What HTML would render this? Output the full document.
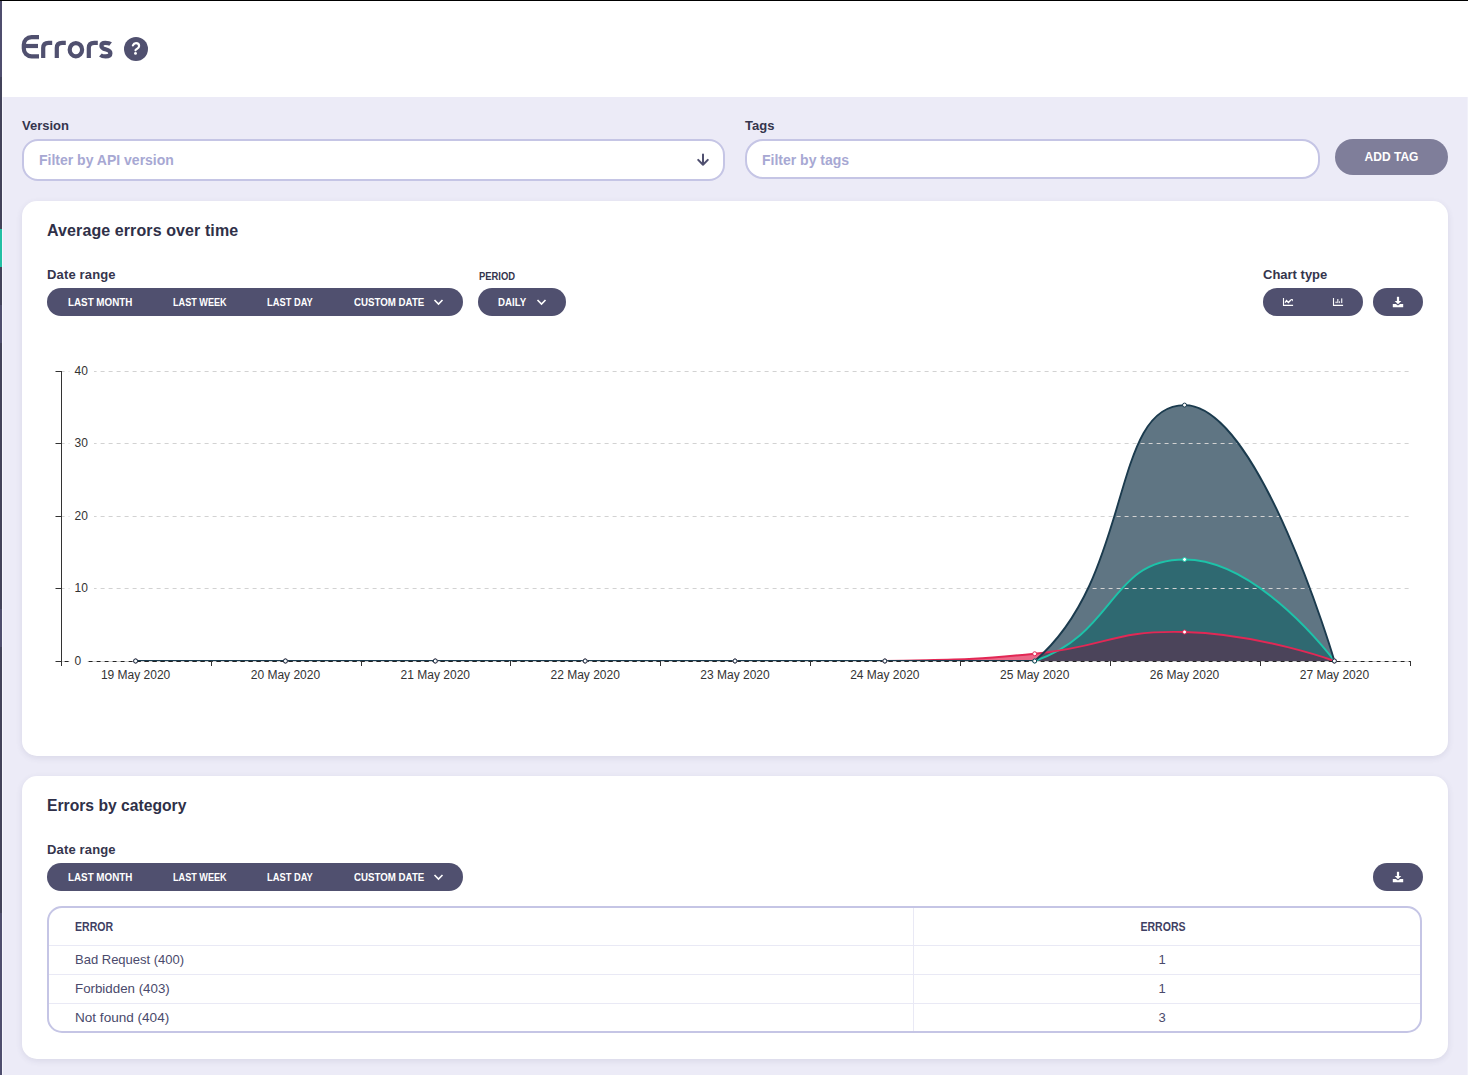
<!DOCTYPE html>
<html><head><meta charset="utf-8">
<style>
*{box-sizing:border-box;margin:0;padding:0}
html,body{width:1468px;height:1075px;overflow:hidden;background:#ecebf7;font-family:"Liberation Sans",sans-serif}
.abs{position:absolute}
.t{position:absolute;white-space:nowrap;line-height:1}
.hdr{position:absolute;left:0;top:0;width:1468px;height:97px;background:#fff}
.topline{position:absolute;left:0;top:0;width:1468px;height:1px;background:#000}
.side{position:absolute;left:0;width:2px}
.lbl{font-weight:bold;font-size:13px;color:#35354d}
.input{position:absolute;background:#fff;border:2px solid #c5c5e5;border-radius:16px}
.ph{font-size:14px;color:#a7a8d3;font-weight:bold}
.card{position:absolute;left:22px;width:1426px;background:#fff;border-radius:15px;box-shadow:0 2px 6px rgba(60,60,110,.11)}
.ctitle{font-weight:bold;font-size:16px;color:#2f3048}
.grp{position:absolute;height:28px;background:#50506f;border-radius:14px}
.bt{position:absolute;white-space:nowrap;line-height:1;color:#fff;font-weight:bold;font-size:10.5px}
.tbl{position:absolute;left:47px;top:906px;width:1375px;height:127px;border:2px solid #c5c5e5;border-radius:15px;background:#fff;overflow:hidden}
.row{position:absolute;left:0;width:1371px;height:1px;background:#e9e9f5}
.cell{position:absolute;white-space:nowrap;line-height:1;font-size:13px;color:#4a4a6c}
</style></head>
<body>
<div class="hdr"></div>
<div class="topline"></div>
<!-- sidebar strip -->
<div class="abs" style="left:1467px;top:97px;width:1px;height:978px;background:#f1f1fa"></div>
<div class="abs" style="left:2px;top:97px;width:1px;height:978px;background:#f7f7fd"></div>
<div class="side" style="top:1px;height:76px;background:#4f4e6e"></div>
<div class="side" style="top:77px;height:152px;background:#43435a"></div>
<div class="side" style="top:229px;height:38px;background:#22bfa4"></div>
<div class="side" style="top:267px;height:38px;background:#43435a"></div>
<div class="side" style="top:305px;height:38px;background:#4f4e6e"></div>
<div class="side" style="top:343px;height:266px;background:#43435a"></div>
<div class="side" style="top:609px;height:38px;background:#4f4e6e"></div>
<div class="side" style="top:647px;height:266px;background:#43435a"></div>
<div class="side" style="top:913px;height:162px;background:#4f4e6e"></div>

<!-- page title -->
<svg class="abs" style="left:0;top:0" width="130" height="70" viewBox="0 0 130 70"><g fill="none" stroke="#50506f" stroke-width="4.2" stroke-linejoin="round">
<path d="M39,37.1H31.6C26.9,37.1 23.8,40.6 23.8,44.8V48.6C23.8,52.8 26.9,56.3 31.6,56.3H39"/>
<path d="M24,46H38"/>
<path d="M43.2,58V48C43.2,44.6 45.4,42.9 48.6,42.9H52.2"/>
<path d="M56.8,58V48C56.8,44.6 59,42.9 62.2,42.9H65.8"/>
<ellipse cx="75.9" cy="49.7" rx="6.2" ry="6.6"/>
<path d="M88.8,58V48C88.8,44.6 91,42.9 94.2,42.9H97.8"/>
<path d="M110.6,44C109.6,43.2 107.4,42.9 105.3,42.9C102.5,42.9 101.4,44.3 101.4,45.9C101.4,48.1 103.6,48.8 106.2,49.5C108.8,50.2 110.4,51.1 110.4,53.2C110.4,55.1 108.8,56.4 105.6,56.4C103.6,56.4 101.6,56 100.4,55"/>
</g></svg>
<svg class="abs" style="left:124px;top:37px" width="24" height="24" viewBox="0 0 24 24"><circle cx="12" cy="12" r="12" fill="#50506f"/><path d="M8.9,8.4C9.5,7 10.6,6.2 12,6.2C13.8,6.2 15.1,7.5 15.1,9.1C15.1,10.5 14.1,11.2 13,11.9C12.1,12.5 11.5,12.8 11.5,13.3" stroke="#fff" stroke-width="2.2" stroke-linecap="round" fill="none"/><circle cx="11.5" cy="16.4" r="1.45" fill="#fff"/></svg>

<!-- filters -->
<div class="t lbl" style="left:22px;top:119px">Version</div>
<div class="input" style="left:22px;top:139px;width:703px;height:42px"></div>
<div class="t ph" style="left:39px;top:153px">Filter by API version</div>
<svg class="abs" style="left:696px;top:153px" width="14" height="15" viewBox="0 0 14 15"><path d="M7 1.5V11.8M2.2 6.9l4.8 4.9 4.8-4.9" stroke="#4f4f6f" stroke-width="2" fill="none" stroke-linecap="round" stroke-linejoin="round"/></svg>

<div class="t lbl" style="left:745px;top:119px">Tags</div>
<div class="input" style="left:745px;top:139px;width:575px;height:40px;border-radius:18px"></div>
<div class="t ph" style="left:762px;top:153px">Filter by tags</div>
<div class="abs" style="left:1335px;top:139px;width:113px;height:36px;border-radius:18px;background:#7f7e9a"></div>
<div class="t" style="left:1335px;top:151px;width:113px;text-align:center;color:#fff;font-weight:bold;font-size:12px">ADD TAG</div>

<!-- card 1 -->
<div class="card" style="top:201px;height:555px"></div>
<div class="t ctitle" style="left:47px;top:223px;letter-spacing:0.1px">Average errors over time</div>
<div class="t lbl" style="left:47px;top:268px;letter-spacing:0.15px">Date range</div>
<div class="grp" style="left:47px;top:288px;width:416px"></div>
<div class="bt" style="left:67.6px;top:297px;transform:scaleX(0.935);transform-origin:0 0">LAST MONTH</div>
<div class="bt" style="left:172.6px;top:297px;transform:scaleX(0.868);transform-origin:0 0">LAST WEEK</div>
<div class="bt" style="left:266.6px;top:297px;transform:scaleX(0.887);transform-origin:0 0">LAST DAY</div>
<div class="bt" style="left:353.6px;top:297px;transform:scaleX(0.925);transform-origin:0 0">CUSTOM DATE</div>
<svg class="abs" style="left:433px;top:298px" width="11" height="8" viewBox="0 0 11 8"><path d="M1.5 2l4 4 4-4" stroke="#fff" stroke-width="1.6" fill="none"/></svg>

<div class="t" style="left:478.5px;top:272px;font-size:10px;font-weight:bold;color:#35354d;transform:scaleX(0.942);transform-origin:0 0">PERIOD</div>
<div class="grp" style="left:478px;top:288px;width:88px"></div>
<div class="bt" style="left:498.3px;top:297px;transform:scaleX(0.926);transform-origin:0 0">DAILY</div>
<svg class="abs" style="left:536px;top:298px" width="11" height="8" viewBox="0 0 11 8"><path d="M1.5 2l4 4 4-4" stroke="#fff" stroke-width="1.6" fill="none"/></svg>

<div class="t lbl" style="left:1263px;top:268px">Chart type</div>
<div class="grp" style="left:1263px;top:288px;width:100px"></div>
<div class="grp" style="left:1373px;top:288px;width:50px"></div>
<svg class="abs" style="left:1278px;top:294px" width="20" height="16" viewBox="0 0 20 16"><path d="M5.5 4v7.4h9.6" stroke="#fff" stroke-width="1.1" fill="none"/><path d="M7.1 8.7l1.4-2.1 1.9 2 2.4-2.6" stroke="#fff" stroke-width="1.4" fill="none"/><path d="M12.2 4.9h2.6v2.6z" fill="#fff"/></svg>
<svg class="abs" style="left:1328px;top:294px" width="20" height="16" viewBox="0 0 20 16"><path d="M5.5 4v7.4h9.6" stroke="#fff" stroke-width="1.1" fill="none"/><rect x="7.3" y="7.6" width="1.7" height="1.5" fill="#fff" fill-opacity=".7"/><rect x="9" y="5" width="1.5" height="4.1" fill="#fff" fill-opacity=".7"/><rect x="10.9" y="7.2" width="1.2" height="1.9" fill="#fff" fill-opacity=".8"/><rect x="13.1" y="4.4" width="1.2" height="4.7" fill="#fff" fill-opacity=".9"/></svg>
<svg class="abs" style="left:1391px;top:295px" width="14" height="14" viewBox="0 0 14 14"><rect x="5.9" y="1.8" width="2.2" height="5" fill="#fff"/><path d="M3.7 5.9h6.6L7 9.3z" fill="#fff"/><path d="M1.8 8.9h3.1L7 10.6l2.1-1.7h3.1v3.4H1.8z" fill="#fff"/></svg>

<!-- card 2 -->
<div class="card" style="top:776px;height:283px"></div>
<div class="t ctitle" style="left:47px;top:798px;transform:scaleX(0.98);transform-origin:0 0">Errors by category</div>
<div class="t lbl" style="left:47px;top:843px;letter-spacing:0.15px">Date range</div>
<div class="grp" style="left:47px;top:863px;width:416px"></div>
<div class="bt" style="left:67.6px;top:872px;transform:scaleX(0.935);transform-origin:0 0">LAST MONTH</div>
<div class="bt" style="left:172.6px;top:872px;transform:scaleX(0.868);transform-origin:0 0">LAST WEEK</div>
<div class="bt" style="left:266.6px;top:872px;transform:scaleX(0.887);transform-origin:0 0">LAST DAY</div>
<div class="bt" style="left:353.6px;top:872px;transform:scaleX(0.925);transform-origin:0 0">CUSTOM DATE</div>
<svg class="abs" style="left:433px;top:873px" width="11" height="8" viewBox="0 0 11 8"><path d="M1.5 2l4 4 4-4" stroke="#fff" stroke-width="1.6" fill="none"/></svg>
<div class="grp" style="left:1373px;top:863px;width:50px"></div>
<svg class="abs" style="left:1391px;top:870px" width="14" height="14" viewBox="0 0 14 14"><rect x="5.9" y="1.8" width="2.2" height="5" fill="#fff"/><path d="M3.7 5.9h6.6L7 9.3z" fill="#fff"/><path d="M1.8 8.9h3.1L7 10.6l2.1-1.7h3.1v3.4H1.8z" fill="#fff"/></svg>

<div class="tbl">
  <div class="row" style="top:37px"></div>
  <div class="row" style="top:66px"></div>
  <div class="row" style="top:95px"></div>
  <div class="abs" style="left:864px;top:0;width:1px;height:124px;background:#e9e9f5"></div>
</div>
<div class="cell" style="left:75px;top:920.5px;font-weight:bold;font-size:12px;color:#3f3f63;transform:scaleX(0.88);transform-origin:0 0">ERROR</div>
<div class="cell" style="left:1112.7px;top:920.5px;width:100px;text-align:center;font-weight:bold;font-size:12px;color:#3f3f63;transform:scaleX(0.88)">ERRORS</div>
<div class="cell" style="left:75px;top:953px">Bad Request (400)</div>
<div class="cell" style="left:75px;top:982px;transform:scaleX(1.024);transform-origin:0 0">Forbidden (403)</div>
<div class="cell" style="left:75px;top:1011px;transform:scaleX(1.043);transform-origin:0 0">Not found (404)</div>
<div class="cell" style="left:1112px;top:953px;width:100px;text-align:center">1</div>
<div class="cell" style="left:1112px;top:982px;width:100px;text-align:center">1</div>
<div class="cell" style="left:1112px;top:1011px;width:100px;text-align:center">3</div>

<!-- CHART -->
<svg class="abs" style="left:0;top:0" width="1468" height="760">
<defs><clipPath id="ca"><rect x="61.4" y="360" width="1349" height="301.5"/></clipPath></defs>
<g clip-path="url(#ca)">
<path d="M135.60,661.00 C210.52,661.00 210.52,661.00 285.45,661.00 C360.38,661.00 360.38,661.00 435.30,661.00 C510.22,661.00 510.22,661.00 585.15,661.00 C660.08,661.00 660.08,661.00 735.00,661.00 C809.92,661.00 809.92,661.00 884.85,661.00 C959.77,661.00 966.83,661.00 1034.70,661.00 C1116.68,633.24 1109.62,559.50 1184.55,559.50 C1259.47,559.50 1334.40,661.00 1334.40,661.00 L1334.40,661.00 L135.60,661.00 Z" fill="#1dc3a9" fill-opacity="0.7"/>
<path d="M135.60,661.00 C210.52,661.00 210.52,661.00 285.45,661.00 C360.38,661.00 360.38,661.00 435.30,661.00 C510.22,661.00 510.22,661.00 585.15,661.00 C660.08,661.00 660.08,661.00 735.00,661.00 C809.92,661.00 809.97,661.00 884.85,661.00 C959.82,659.19 960.12,660.97 1034.70,653.75 C1109.97,646.47 1109.92,630.19 1184.55,632.00 C1259.77,633.82 1334.40,661.00 1334.40,661.00 L1334.40,661.00 L135.60,661.00 Z" fill="#e22855" fill-opacity="0.7"/>
<path d="M135.60,661.00 C210.52,661.00 210.52,661.00 285.45,661.00 C360.38,661.00 360.38,661.00 435.30,661.00 C510.22,661.00 510.22,661.00 585.15,661.00 C660.08,661.00 660.08,661.00 735.00,661.00 C809.92,661.00 809.92,661.00 884.85,661.00 C959.77,661.00 984.40,661.00 1034.70,661.00 C1134.25,575.99 1109.62,405.08 1184.55,405.08 C1259.47,405.08 1334.40,661.00 1334.40,661.00 L1334.40,661.00 L135.60,661.00 Z" fill="#1b3b4e" fill-opacity="0.7"/>
</g>
<line x1="60.6" y1="588.50" x2="1410" y2="588.50" stroke="#d2d2d2" stroke-width="1" stroke-dasharray="4 4"/>
<line x1="60.6" y1="516.50" x2="1410" y2="516.50" stroke="#d2d2d2" stroke-width="1" stroke-dasharray="4 4"/>
<line x1="60.6" y1="443.50" x2="1410" y2="443.50" stroke="#d2d2d2" stroke-width="1" stroke-dasharray="4 4"/>
<line x1="60.6" y1="371.50" x2="1410" y2="371.50" stroke="#d2d2d2" stroke-width="1" stroke-dasharray="4 4"/>
<path d="M135.60,661.00 C210.52,661.00 210.52,661.00 285.45,661.00 C360.38,661.00 360.38,661.00 435.30,661.00 C510.22,661.00 510.22,661.00 585.15,661.00 C660.08,661.00 660.08,661.00 735.00,661.00 C809.92,661.00 809.92,661.00 884.85,661.00 C959.77,661.00 966.83,661.00 1034.70,661.00 C1116.68,633.24 1109.62,559.50 1184.55,559.50 C1259.47,559.50 1334.40,661.00 1334.40,661.00" fill="none" stroke="#1dc3a9" stroke-width="1.9"/>
<path d="M135.60,661.00 C210.52,661.00 210.52,661.00 285.45,661.00 C360.38,661.00 360.38,661.00 435.30,661.00 C510.22,661.00 510.22,661.00 585.15,661.00 C660.08,661.00 660.08,661.00 735.00,661.00 C809.92,661.00 809.97,661.00 884.85,661.00 C959.82,659.19 960.12,660.97 1034.70,653.75 C1109.97,646.47 1109.92,630.19 1184.55,632.00 C1259.77,633.82 1334.40,661.00 1334.40,661.00" fill="none" stroke="#e22855" stroke-width="1.9"/>
<path d="M135.60,661.00 C210.52,661.00 210.52,661.00 285.45,661.00 C360.38,661.00 360.38,661.00 435.30,661.00 C510.22,661.00 510.22,661.00 585.15,661.00 C660.08,661.00 660.08,661.00 735.00,661.00 C809.92,661.00 809.92,661.00 884.85,661.00 C959.77,661.00 984.40,661.00 1034.70,661.00 C1134.25,575.99 1109.62,405.08 1184.55,405.08 C1259.47,405.08 1334.40,661.00 1334.40,661.00" fill="none" stroke="#1b3b4e" stroke-width="1.9"/>
<line x1="60.6" y1="661.5" x2="1410" y2="661.5" stroke="#d2d2d2" stroke-width="1" stroke-dasharray="4 4"/>
<line x1="64.6" y1="661.5" x2="1410" y2="661.5" stroke="#222" stroke-width="1" stroke-dasharray="4 4"/>
<circle cx="135.60" cy="661.00" r="2" fill="#fff" stroke="#1dc3a9" stroke-width="1"/>
<circle cx="285.45" cy="661.00" r="2" fill="#fff" stroke="#1dc3a9" stroke-width="1"/>
<circle cx="435.30" cy="661.00" r="2" fill="#fff" stroke="#1dc3a9" stroke-width="1"/>
<circle cx="585.15" cy="661.00" r="2" fill="#fff" stroke="#1dc3a9" stroke-width="1"/>
<circle cx="735.00" cy="661.00" r="2" fill="#fff" stroke="#1dc3a9" stroke-width="1"/>
<circle cx="884.85" cy="661.00" r="2" fill="#fff" stroke="#1dc3a9" stroke-width="1"/>
<circle cx="1034.70" cy="661.00" r="2" fill="#fff" stroke="#1dc3a9" stroke-width="1"/>
<circle cx="1184.55" cy="559.50" r="2" fill="#fff" stroke="#1dc3a9" stroke-width="1"/>
<circle cx="1334.40" cy="661.00" r="2" fill="#fff" stroke="#1dc3a9" stroke-width="1"/>
<circle cx="135.60" cy="661.00" r="2" fill="#fff" stroke="#e22855" stroke-width="1"/>
<circle cx="285.45" cy="661.00" r="2" fill="#fff" stroke="#e22855" stroke-width="1"/>
<circle cx="435.30" cy="661.00" r="2" fill="#fff" stroke="#e22855" stroke-width="1"/>
<circle cx="585.15" cy="661.00" r="2" fill="#fff" stroke="#e22855" stroke-width="1"/>
<circle cx="735.00" cy="661.00" r="2" fill="#fff" stroke="#e22855" stroke-width="1"/>
<circle cx="884.85" cy="661.00" r="2" fill="#fff" stroke="#e22855" stroke-width="1"/>
<circle cx="1034.70" cy="653.75" r="2" fill="#fff" stroke="#e22855" stroke-width="1"/>
<circle cx="1184.55" cy="632.00" r="2" fill="#fff" stroke="#e22855" stroke-width="1"/>
<circle cx="1334.40" cy="661.00" r="2" fill="#fff" stroke="#e22855" stroke-width="1"/>
<circle cx="135.60" cy="661.00" r="2" fill="#fff" stroke="#1b3b4e" stroke-width="1"/>
<circle cx="285.45" cy="661.00" r="2" fill="#fff" stroke="#1b3b4e" stroke-width="1"/>
<circle cx="435.30" cy="661.00" r="2" fill="#fff" stroke="#1b3b4e" stroke-width="1"/>
<circle cx="585.15" cy="661.00" r="2" fill="#fff" stroke="#1b3b4e" stroke-width="1"/>
<circle cx="735.00" cy="661.00" r="2" fill="#fff" stroke="#1b3b4e" stroke-width="1"/>
<circle cx="884.85" cy="661.00" r="2" fill="#fff" stroke="#1b3b4e" stroke-width="1"/>
<circle cx="1034.70" cy="661.00" r="2" fill="#fff" stroke="#1b3b4e" stroke-width="1"/>
<circle cx="1184.55" cy="405.08" r="2" fill="#fff" stroke="#1b3b4e" stroke-width="1"/>
<circle cx="1334.40" cy="661.00" r="2" fill="#fff" stroke="#1b3b4e" stroke-width="1"/>
<line x1="61.5" y1="371" x2="61.5" y2="666" stroke="#333" stroke-width="1"/>
<line x1="55.5" y1="661.50" x2="61.5" y2="661.50" stroke="#333" stroke-width="1"/>
<rect x="69.5" y="656.50" width="18.0" height="10" fill="#fff"/>
<text x="74.5" y="661.50" font-size="12" fill="#333" dominant-baseline="middle">0</text>
<line x1="55.5" y1="588.50" x2="61.5" y2="588.50" stroke="#333" stroke-width="1"/>
<rect x="69.5" y="583.50" width="24.5" height="10" fill="#fff"/>
<text x="74.5" y="588.50" font-size="12" fill="#333" dominant-baseline="middle">10</text>
<line x1="55.5" y1="516.50" x2="61.5" y2="516.50" stroke="#333" stroke-width="1"/>
<rect x="69.5" y="511.50" width="24.5" height="10" fill="#fff"/>
<text x="74.5" y="516.50" font-size="12" fill="#333" dominant-baseline="middle">20</text>
<line x1="55.5" y1="443.50" x2="61.5" y2="443.50" stroke="#333" stroke-width="1"/>
<rect x="69.5" y="438.50" width="24.5" height="10" fill="#fff"/>
<text x="74.5" y="443.50" font-size="12" fill="#333" dominant-baseline="middle">30</text>
<line x1="55.5" y1="371.50" x2="61.5" y2="371.50" stroke="#333" stroke-width="1"/>
<rect x="69.5" y="366.50" width="24.5" height="10" fill="#fff"/>
<text x="74.5" y="371.50" font-size="12" fill="#333" dominant-baseline="middle">40</text>
<line x1="61.50" y1="661" x2="61.50" y2="666" stroke="#333" stroke-width="1"/>
<line x1="211.50" y1="661" x2="211.50" y2="666" stroke="#333" stroke-width="1"/>
<line x1="361.50" y1="661" x2="361.50" y2="666" stroke="#333" stroke-width="1"/>
<line x1="510.50" y1="661" x2="510.50" y2="666" stroke="#333" stroke-width="1"/>
<line x1="660.50" y1="661" x2="660.50" y2="666" stroke="#333" stroke-width="1"/>
<line x1="810.50" y1="661" x2="810.50" y2="666" stroke="#333" stroke-width="1"/>
<line x1="960.50" y1="661" x2="960.50" y2="666" stroke="#333" stroke-width="1"/>
<line x1="1110.50" y1="661" x2="1110.50" y2="666" stroke="#333" stroke-width="1"/>
<line x1="1260.50" y1="661" x2="1260.50" y2="666" stroke="#333" stroke-width="1"/>
<line x1="1410.50" y1="661" x2="1410.50" y2="666" stroke="#333" stroke-width="1"/>
<text x="135.60" y="678.8" font-size="12" fill="#333" text-anchor="middle">19 May 2020</text>
<text x="285.45" y="678.8" font-size="12" fill="#333" text-anchor="middle">20 May 2020</text>
<text x="435.30" y="678.8" font-size="12" fill="#333" text-anchor="middle">21 May 2020</text>
<text x="585.15" y="678.8" font-size="12" fill="#333" text-anchor="middle">22 May 2020</text>
<text x="735.00" y="678.8" font-size="12" fill="#333" text-anchor="middle">23 May 2020</text>
<text x="884.85" y="678.8" font-size="12" fill="#333" text-anchor="middle">24 May 2020</text>
<text x="1034.70" y="678.8" font-size="12" fill="#333" text-anchor="middle">25 May 2020</text>
<text x="1184.55" y="678.8" font-size="12" fill="#333" text-anchor="middle">26 May 2020</text>
<text x="1334.40" y="678.8" font-size="12" fill="#333" text-anchor="middle">27 May 2020</text>
</svg>
<!-- /CHART -->
</body></html>
